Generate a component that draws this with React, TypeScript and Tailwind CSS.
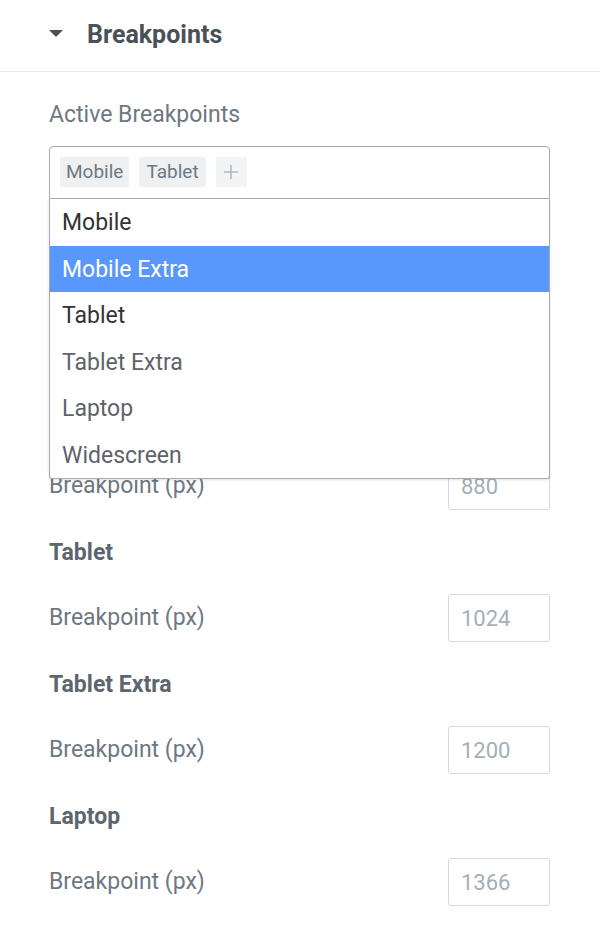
import React from "react";

const sections = [
  { title: "Mobile", value: "767" },
  { title: "Mobile Extra", value: "880" },
  { title: "Tablet", value: "1024" },
  { title: "Tablet Extra", value: "1200" },
  { title: "Laptop", value: "1366" },
];

const options = [
  { label: "Mobile", selected: true },
  { label: "Mobile Extra", highlighted: true },
  { label: "Tablet", selected: true },
  { label: "Tablet Extra" },
  { label: "Laptop" },
  { label: "Widescreen" },
];

export default function App() {
  return (
    <div
      className="w-[600px] h-[929px] bg-white overflow-hidden"
      style={{ fontFamily: "Roboto, 'Liberation Sans', sans-serif" }}
    >
      {/* Header */}
      <div className="h-[72px] flex items-center pl-[49px] border-b border-[#e6e8ea] pb-[3px]">
        <svg width="14" height="8" viewBox="0 0 14 8" className="mr-[24px]">
          <path d="M0 0 L14 0 L7 7 Z" fill="#495157" />
        </svg>
        <span className="text-[25px] font-bold text-[#495157] leading-none">Breakpoints</span>
      </div>

      <div className="pl-[49px] pr-[50px]">
        <div className="mt-[29px] h-[26px] flex items-center text-[23px] text-[#6d7882] leading-none">
          Active Breakpoints
        </div>

        {/* Select */}
        <div className="relative mt-[19px]">
          <div className="h-[53px] border border-[#aaaaaa] rounded-t-[4px] flex items-start gap-[10px] pl-[10px] pt-[10px]">
            <span className="h-[30px] px-[6px] bg-[#eef0f2] text-[#6d7882] text-[19px] flex items-center rounded-[2px]">
              Mobile
            </span>
            <span className="h-[30px] px-[7px] bg-[#eef0f2] text-[#6d7882] text-[19px] flex items-center rounded-[2px]">
              Tablet
            </span>
            <span className="h-[30px] w-[31px] bg-[#f3f4f5] flex items-center justify-center rounded-[2px]">
              <svg width="16" height="16" viewBox="0 0 16 16">
                <path d="M8 1 V15 M1 8 H15" stroke="#b4b9be" strokeWidth="1.6" />
              </svg>
            </span>
          </div>

          {/* Dropdown overlay */}
          <div className="absolute left-0 right-0 top-full z-10 bg-white border border-t-0 border-[#aaaaaa] rounded-b-[3px] shadow-[0_1px_3px_rgba(0,0,0,0.12)]">
            {options.map((o) => (
              <div
                key={o.label}
                className={
                  o.highlighted
                    ? "h-[46.5px] flex items-center pl-[12px] pt-[2px] text-[23px] bg-[#5897fb] text-white"
                    : o.selected
                    ? "h-[46.5px] flex items-center pl-[12px] pt-[2px] text-[23px] text-[#333333]"
                    : "h-[46.5px] flex items-center pl-[12px] pt-[2px] text-[23px] text-[#5f6368]"
                }
              >
                {o.label}
              </div>
            ))}
          </div>
        </div>

        {/* Sections */}
        <div className="mt-[76px]">
          {sections.map((s) => (
            <div key={s.title} className="pb-[29px]">
              <div className="h-[26px] flex items-center text-[23px] font-bold text-[#5d666e] leading-none">
                {s.title}
              </div>
              <div className="mt-[29px] h-[48px] flex items-center justify-between">
                <span className="text-[23px] text-[#6d7882]">Breakpoint (px)</span>
                <div className="w-[102px] h-[48px] border border-[#d5dadf] rounded-[3px] flex items-center pl-[12px] text-[22px] text-[#a4afb7]">
                  {s.value}
                </div>
              </div>
            </div>
          ))}
        </div>
      </div>
    </div>
  );
}
